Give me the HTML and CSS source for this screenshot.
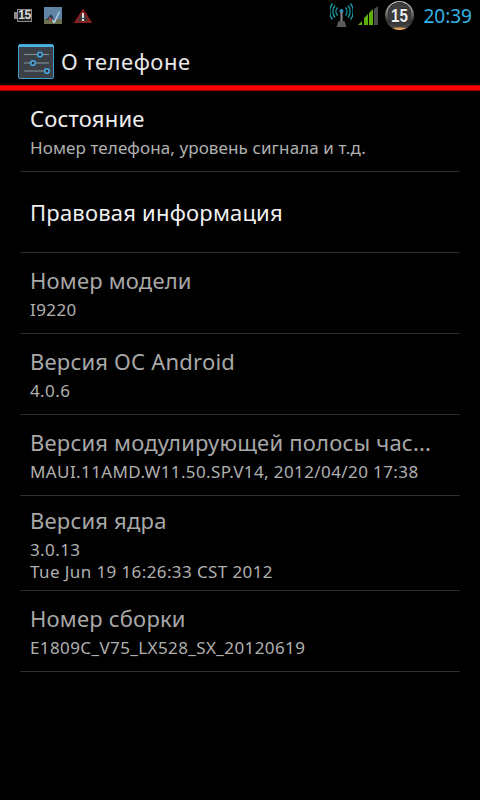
FILE: index.html
```html
<!DOCTYPE html>
<html lang="en">
<head>
    <meta charset="UTF-8">
    <meta name="viewport" content="width=device-width, initial-scale=1.0">
    <title>О телефоне</title>
    <link rel="stylesheet" href="styles.css">
</head>
<body>
    <div class="status-bar">
        <div class="status-left">
            <div class="battery">
                <span class="battery-nub"></span>
                <span class="battery-body">15</span>
            </div>
            <svg class="icon-photo" width="18" height="17" viewBox="0 0 18 17">
                <rect width="18" height="17" fill="#5f84a6"/>
                <rect y="12" width="18" height="5" fill="#6a7050"/>
                <path d="M2 13l5-6 2 3 1 3z" fill="#27405a"/>
                <path d="M8 11l2 3 5-10 1 1-5 11h-2z" fill="#a9d0e8"/>
                <path d="M5 10l2 1 1 3-3 0z" fill="#b84a4a"/>
            </svg>
            <svg class="icon-warning" width="18" height="14" viewBox="0 0 18 14">
                <path d="M9 1.500l7.500 11.500H1.500z" fill="#3a3a3a" stroke="#8c1d1d" stroke-width="2"/>
                <rect x="8" y="4" width="2" height="5" fill="#e0e0e0"/>
                <rect x="8" y="10" width="2" height="2" fill="#e0e0e0"/>
            </svg>
        </div>
        <div class="status-right">
            <svg class="icon-hotspot" width="23" height="24" viewBox="0 0 23 24">
                <g fill="none" stroke="#16a0a8" stroke-width="1.300">
                    <path d="M7.500 4.500a6 6 0 0 0 0 8"/>
                    <path d="M5 2.500a9.500 9.500 0 0 0 0 12"/>
                    <path d="M2.500 .5a13 13 0 0 0 0 16"/>
                    <path d="M15.500 4.500a6 6 0 0 1 0 8"/>
                    <path d="M18 2.500a9.500 9.500 0 0 1 0 12"/>
                    <path d="M20.500 .5a13 13 0 0 1 0 16"/>
                </g>
                <circle cx="11.500" cy="8" r="2" fill="#2f8fc4"/>
                <rect x="10.500" y="9" width="2" height="9" fill="#8a8a8a"/>
                <path d="M6.500 24l2-6h6l2 6z" fill="#5a5a5a"/>
            </svg>
            <svg class="icon-signal" width="20" height="19" viewBox="0 0 20 19">
                <path d="M0 19l4-4v4z" fill="#5fb00a"/>
                <path d="M6 19v-7l4-4v11z" fill="#5fb00a"/>
                <path d="M11 19V7l4-4v16z" fill="#5fb00a"/>
                <path d="M16 19V3l4-3v19z" fill="#4a4a4a"/>
            </svg>
            <div class="badge"><span class="badge-num">15</span></div>
            <span class="clock">20:39</span>
        </div>
    </div>

    <header class="action-bar">
        <svg class="settings-icon" width="36" height="36" viewBox="0 0 36 36">
            <rect x="0.500" y="0.500" width="35" height="34" rx="1.500" fill="#3a4046" stroke="#3f9ccc"/>
            <rect x="1" y="1" width="34" height="2" fill="#4ab4e4"/>
            <g stroke="#7d8a94" stroke-width="1.200">
                <line x1="6" y1="10.500" x2="31" y2="10.500"/>
                <line x1="6" y1="19" x2="31" y2="19"/>
                <line x1="6" y1="27" x2="31" y2="27"/>
            </g>
            <g fill="#2c3034" stroke="#45a8e0" stroke-width="1.600">
                <circle cx="22" cy="10.500" r="2.300"/>
                <circle cx="15" cy="19" r="2.300"/>
                <circle cx="29" cy="27" r="2.300"/>
            </g>
        </svg>
        <h1>О телефоне</h1>
    </header>
    <div class="red-line"></div>

    <ul class="settings">
        <li class="row">
            <div class="title">Состояние</div>
            <div class="sub">Номер телефона, уровень сигнала и т.д.</div>
        </li>
        <li class="row single">
            <div class="title">Правовая информация</div>
        </li>
        <li class="row off">
            <div class="title">Номер модели</div>
            <div class="sub latin">I9220</div>
        </li>
        <li class="row off">
            <div class="title">Версия ОС Android</div>
            <div class="sub latin">4.0.6</div>
        </li>
        <li class="row off">
            <div class="title">Версия модулирующей полосы час...</div>
            <div class="sub latin">MAUI.11AMD.W11.50.SP.V14, 2012/04/20 17:38</div>
        </li>
        <li class="row tall off">
            <div class="title">Версия ядра</div>
            <div class="sub latin">3.0.13<br>Tue Jun 19 16:26:33 CST 2012</div>
        </li>
        <li class="row off">
            <div class="title">Номер сборки</div>
            <div class="sub latin">E1809C_V75_LX528_SX_20120619</div>
        </li>
    </ul>
</body>
</html>
```

FILE: styles.css
```css
* {
    box-sizing: border-box;
}
body {
    font-family: 'Noto Sans', 'Open Sans', sans-serif;
    margin: 0;
    padding: 0;
    background-color: #000;
    color: #e8e8e8;
    width: 480px;
    height: 800px;
    overflow: hidden;
}
.status-bar {
    height: 38px;
    display: flex;
    justify-content: space-between;
    padding: 0 8px 0 14px;
}
.status-left {
    display: flex;
    align-items: center;
    height: 31px;
}
.battery {
    display: flex;
    align-items: center;
    margin-right: 12px;
}
.battery-nub {
    width: 3px;
    height: 7px;
    background-color: #8a8a8a;
}
.battery-body {
    width: 15px;
    height: 13px;
    background-color: #222;
    border: 1px solid #8a8a8a;
    color: #ddd;
    font-family: 'Liberation Sans', sans-serif;
    font-size: 12px;
    font-weight: 700;
    letter-spacing: -0.5px;
    line-height: 11px;
    text-align: center;
}
.icon-photo {
    margin-right: 12px;
}
.status-right {
    display: flex;
    align-items: flex-start;
}
.icon-hotspot {
    margin: 3px 5px 0 0;
}
.icon-signal {
    margin: 6px 7px 0 0;
}
.badge {
    width: 29px;
    height: 29px;
    margin: 1px 9px 0 0;
    border-radius: 50%;
    background:
        radial-gradient(ellipse 12px 3px at 50% 100%, #f0b060 0%, #d89a50 70%, transparent 100%),
        radial-gradient(circle at 50% 45%, #4a4a4a 0%, #3a3a3a 55%, transparent 56%),
        linear-gradient(#c0c0c0, #888 30%, #303030 70%, #555);
    display: flex;
    align-items: center;
    justify-content: center;
}
.badge-num {
    font-family: 'Liberation Sans', sans-serif;
    font-size: 19px;
    font-weight: 700;
    color: #eee;
    transform: scaleX(0.8);
    text-shadow: 0 0 2px #000;
}
.clock {
    font-size: 19px;
    line-height: 32px;
    color: #33b5e5;
}
.action-bar {
    height: 47px;
    display: flex;
    align-items: center;
    padding-left: 18px;
}
.settings-icon {
    margin-right: 7px;
}
.action-bar h1 {
    margin: 0 0 2px;
    font-size: 22px;
    font-weight: 400;
    letter-spacing: 0.5px;
    color: #e8e8e8;
}
.red-line {
    height: 6px;
    background: linear-gradient(#a00000, #ff0000 25%, #ff0000 70%, #800000);
}
.settings {
    list-style: none;
    margin: 0;
    padding: 0 20px;
}
.row {
    height: 81px;
    border-bottom: 1px solid #2e2e2e;
    padding: 12px 10px 0;
}
.tall {
    height: 95px;
    padding-top: 9px;
}
.single {
    padding-top: 25px;
}
.title {
    font-size: 22px;
    letter-spacing: 0.2px;
    line-height: 30px;
    color: #f0f0f0;
    white-space: nowrap;
}
.sub {
    font-size: 17px;
    line-height: 22px;
    margin-top: 4px;
    color: #b0b0b0;
    white-space: nowrap;
    letter-spacing: 0.1px;
}
.latin {
    letter-spacing: 0.4px;
}
.off .title {
    color: #a8a8a8;
}
```
